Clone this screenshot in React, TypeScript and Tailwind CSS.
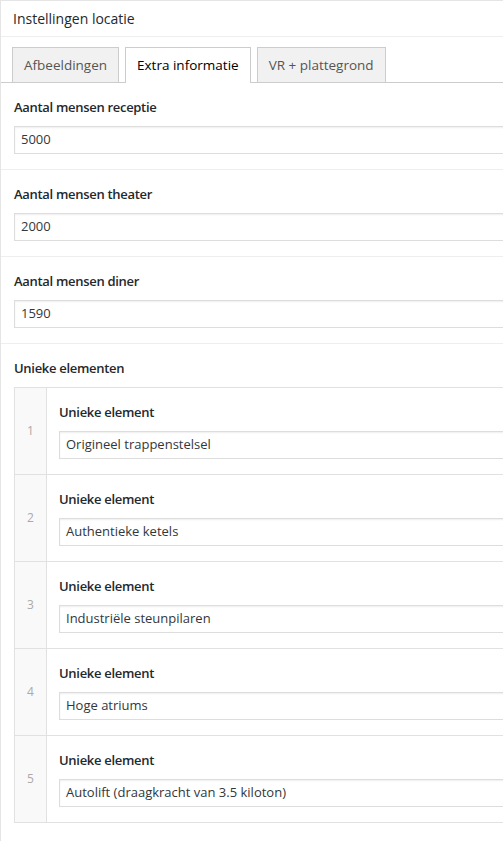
import React from 'react';

const font = { fontFamily: '"Segoe UI", "Open Sans", "Liberation Sans", sans-serif' };

const tabs = ['Afbeeldingen', 'Extra informatie', 'VR + plattegrond'];

const fields = [
  { label: 'Aantal mensen receptie', value: '5000' },
  { label: 'Aantal mensen theater', value: '2000' },
  { label: 'Aantal mensen diner', value: '1590' },
];

const elements = [
  'Origineel trappenstelsel',
  'Authentieke ketels',
  'Industriële steunpilaren',
  'Hoge atriums',
  'Autolift (draagkracht van 3.5 kiloton)',
];

function TextInput({ value }: { value: string }) {
  return (
    <div className="h-[28px] w-[600px] border border-[#dddddd] bg-white px-[6px] flex items-center text-[13px] text-[#32373c] shadow-[inset_0_1px_2px_rgba(0,0,0,0.07)]">
      {value}
    </div>
  );
}

function Label({ children }: { children: React.ReactNode }) {
  return (
    <div className="h-[20px] mb-[8px] flex items-center text-[13px] font-semibold tracking-[-0.3px] text-[#23282d]">
      {children}
    </div>
  );
}

export default function App() {
  return (
    <div className="min-h-[841px] w-full overflow-hidden bg-white border-l border-t border-[#e5e5e5] text-[#23282d]" style={font}>
      <div className="h-[36px] px-[12px] flex items-center text-[14px] border-b border-[#eeeeee]">
        Instellingen locatie
      </div>

      <div className="flex gap-[6px] px-[11px] pt-[10px] border-b border-[#cccccc]">
        {tabs.map((t, i) => (
          <div
            key={t}
            className={
              i === 1
                ? 'h-[36px] px-[11px] flex items-center border border-b-0 border-[#cccccc] bg-white text-[13.5px] text-[#000000] -mb-px'
                : 'h-[35px] px-[11px] flex items-center border border-b-0 border-[#cccccc] bg-[#f1f1f1] text-[13.5px] text-[#555555]'
            }
          >
            {t}
          </div>
        ))}
      </div>

      {fields.map((f, i) => (
        <div key={f.label} className={i === 0 ? 'px-[13px] pt-[15px] pb-[15px]' : 'px-[13px] pt-[15px] pb-[15px] border-t border-[#eeeeee]'}>
          <Label>{f.label}</Label>
          <TextInput value={f.value} />
        </div>
      ))}

      <div className="px-[13px] pt-[15px] pb-[15px] border-t border-[#eeeeee]">
        <Label>Unieke elementen</Label>
        <div className="w-[600px] border border-[#e1e1e1]">
          {elements.map((e, i) => (
            <div key={e} className={i === 0 ? 'flex' : 'flex border-t border-[#e1e1e1]'}>
              <div className="w-[32px] shrink-0 bg-[#f9f9f9] border-r border-[#e1e1e1] flex items-center justify-center text-[12px] text-[#aaaaaa]">
                {i + 1}
              </div>
              <div className="flex-1 px-[12px] pt-[15px] pb-[15px]">
                <Label>Unieke element</Label>
                <TextInput value={e} />
              </div>
            </div>
          ))}
        </div>
      </div>
    </div>
  );
}
